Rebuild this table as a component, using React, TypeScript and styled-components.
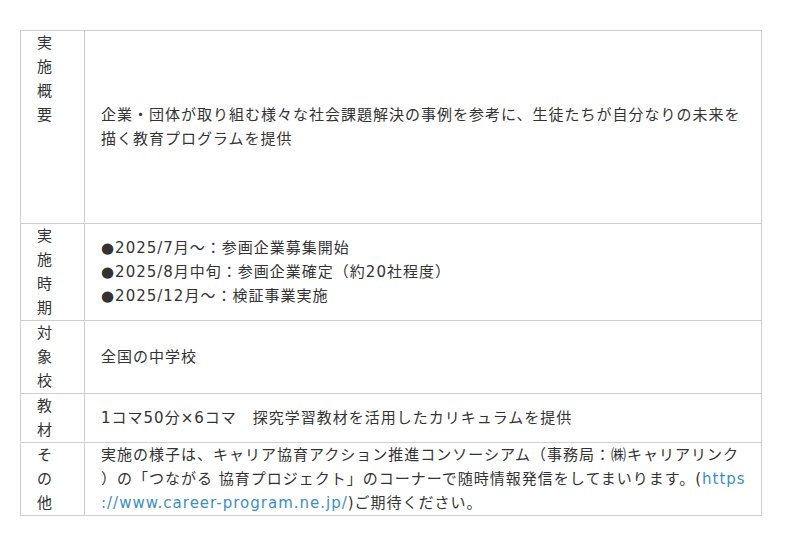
import type { ReactNode } from "react";
import styled, { createGlobalStyle } from "styled-components";

const GlobalStyle = createGlobalStyle`
  body {
    margin: 0;
    background: #fff;
  }
`;

const Page = styled.div`
  padding: 30px 38px 30px 20px;
  font-family: "DejaVu Sans", "Noto Sans CJK JP", sans-serif;
  font-size: 15px;
  letter-spacing: 1px;
  line-height: 24px;
  color: #333;
`;

const Table = styled.table`
  width: 742px;
  border-collapse: collapse;
  table-layout: fixed;
`;

const Tr = styled.tr<{ $tall?: boolean }>`
  height: ${(p) => (p.$tall ? "193px" : "auto")};
`;

const Label = styled.td`
  width: 27px;
  padding: 0 20px 0 16px;
  border: 1px solid #cfcfcf;
  vertical-align: top;
`;

const Content = styled.td`
  padding: 0 15px 0 16px;
  border: 1px solid #cfcfcf;
  vertical-align: middle;
  line-break: anywhere;
`;

const Link = styled.a`
  color: #3b8ec6;
  text-decoration: none;
`;

type Row = {
  label: string;
  tall?: boolean;
  content: ReactNode;
};

const rows: Row[] = [
  {
    label: "実施概要",
    tall: true,
    content:
      "企業・団体が取り組む様々な社会課題解決の事例を参考に、生徒たちが自分なりの未来を描く教育プログラムを提供",
  },
  {
    label: "実施時期",
    content: (
      <>
        ●2025/7月～：参画企業募集開始
        <br />
        ●2025/8月中旬：参画企業確定（約20社程度）
        <br />
        ●2025/12月～：検証事業実施
      </>
    ),
  },
  { label: "対象校", content: "全国の中学校" },
  { label: "教材", content: "1コマ50分×6コマ　探究学習教材を活用したカリキュラムを提供" },
  {
    label: "その他",
    content: (
      <>
        実施の様子は、キャリア協育アクション推進コンソーシアム（事務局：㈱キャリアリンク）の「つながる
        協育プロジェクト」のコーナーで随時情報発信をしてまいります。(
        <Link href="https://www.career-program.ne.jp/">https://www.career-program.ne.jp/</Link>
        )ご期待ください。
      </>
    ),
  },
];

const App = () => (
  <Page>
    <GlobalStyle />
    <Table>
      <tbody>
        {rows.map((row) => (
          <Tr key={row.label} $tall={row.tall}>
            <Label>{row.label}</Label>
            <Content>{row.content}</Content>
          </Tr>
        ))}
      </tbody>
    </Table>
  </Page>
);

export default App;
